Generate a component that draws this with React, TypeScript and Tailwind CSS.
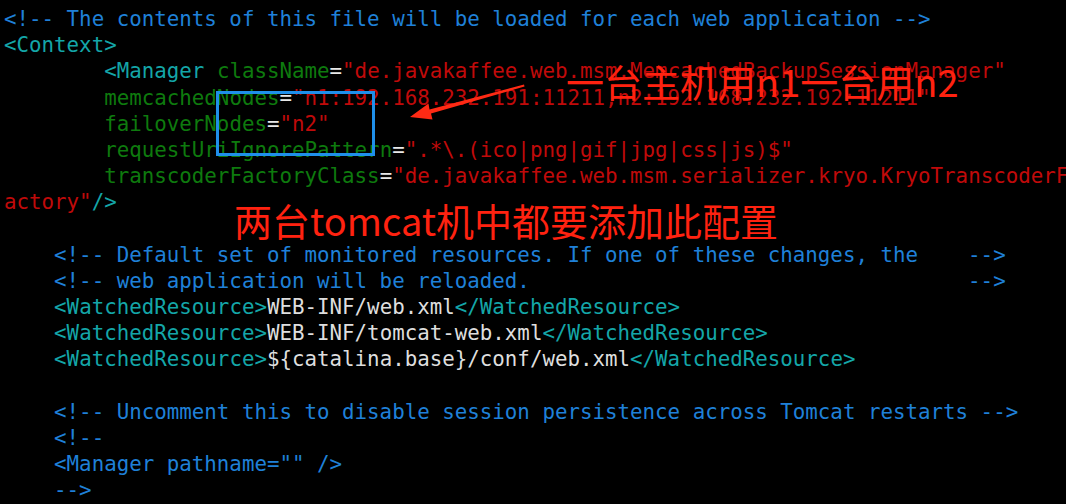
import React from "react";

const C = "text-[#1f80d8]"; // comment
const T = "text-[#14a6a8]"; // tag
const A = "text-[#0e7a0e]"; // attr
const S = "text-[#c00a0a]"; // string
const E = "text-[#e8e8e8]"; // equals
const X = "text-[#dedede]"; // text

type Seg = [string, string];

const lines: Seg[][] = [
  [[C, "<!-- The contents of this file will be loaded for each web application -->"]],
  [[T, "<Context>"]],
  [
    [X, "        "],
    [T, "<Manager"],
    [X, " "],
    [A, "className"],
    [E, "="],
    [S, '"de.javakaffee.web.msm.MemcachedBackupSessionManager"'],
  ],
  [
    [X, "        "],
    [A, "memcachedNodes"],
    [E, "="],
    [S, '"n1:192.168.232.191:11211,n2:192.168.232.192:11211"'],
  ],
  [
    [X, "        "],
    [A, "failoverNodes"],
    [E, "="],
    [S, '"n2"'],
  ],
  [
    [X, "        "],
    [A, "requestUriIgnorePattern"],
    [E, "="],
    [S, '".*\\.(ico|png|gif|jpg|css|js)$"'],
  ],
  [
    [X, "        "],
    [A, "transcoderFactoryClass"],
    [E, "="],
    [S, '"de.javakaffee.web.msm.serializer.kryo.KryoTranscoderF'],
  ],
  [
    [S, 'actory"'],
    [T, "/>"],
  ],
  [[X, " "]],
  [[C, "    <!-- Default set of monitored resources. If one of these changes, the    -->"]],
  [[C, "    <!-- web application will be reloaded.                                   -->"]],
  [
    [X, "    "],
    [T, "<WatchedResource>"],
    [X, "WEB-INF/web.xml"],
    [T, "</WatchedResource>"],
  ],
  [
    [X, "    "],
    [T, "<WatchedResource>"],
    [X, "WEB-INF/tomcat-web.xml"],
    [T, "</WatchedResource>"],
  ],
  [
    [X, "    "],
    [T, "<WatchedResource>"],
    [X, "${catalina.base}/conf/web.xml"],
    [T, "</WatchedResource>"],
  ],
  [[X, " "]],
  [[C, "    <!-- Uncomment this to disable session persistence across Tomcat restarts -->"]],
  [[C, "    <!--"]],
  [[C, '    <Manager pathname="" />']],
  [[C, "    -->"]],
];

export default function App() {
  return (
    <div className="relative h-[504px] w-[1066px] overflow-hidden bg-black">
      <div
        className="flex flex-col pl-[4px] pt-[6px] text-[20.8px] leading-[26.2px]"
        style={{ fontFamily: '"DejaVu Sans Mono", monospace' }}
      >
        {lines.map((line, i) => (
          <div key={i} className="h-[26.2px] whitespace-pre">
            {line.map(([cls, txt], j) => (
              <span key={j} className={cls}>
                {txt}
              </span>
            ))}
          </div>
        ))}
      </div>

      {/* blue highlight box */}
      <div className="absolute left-[216px] top-[91px] h-[65px] w-[159px] border-[3px] border-[#1f8fea]" />

      {/* red arrow */}
      <svg className="absolute left-0 top-0" width="1066" height="504" viewBox="0 0 1066 504">
        <polygon
          points="524,84.5 524.5,86.5 431,113.5 432.5,119.5 410,117 428.5,103.5 429.5,109.5"
          fill="#ff2a14"
        />
      </svg>

      {/* annotation 1 */}
      <div
        className="absolute left-[566px] top-[62px] whitespace-nowrap text-[38px] leading-[38px] text-[#ff2210]"
        style={{ fontFamily: '"Noto Sans CJK SC", "Noto Sans", sans-serif' }}
      >
        一台主机用n1一台用n2
      </div>

      {/* annotation 2 */}
      <div
        className="absolute left-[234px] top-[201px] whitespace-nowrap text-[38px] leading-[38px] text-[#ff2210]"
        style={{ fontFamily: '"Noto Sans CJK SC", "Noto Sans", sans-serif' }}
      >
        两台tomcat机中都要添加此配置
      </div>
    </div>
  );
}
